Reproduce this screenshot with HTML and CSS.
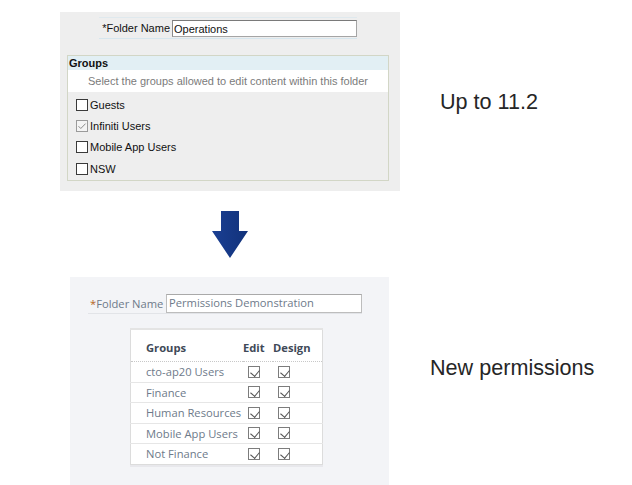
FILE: index.html
```html
<!DOCTYPE html>
<html>
<head>
<meta charset="utf-8">
<link rel="stylesheet" href="styles.css">
</head>
<body>
<main class="slide">
  <section class="row row-old">
    <div class="panel old">
      <div class="old-name">
        <span class="old-label">*Folder Name</span>
        <span class="old-input">Operations</span>
      </div>
      <div class="old-groups">
        <div class="old-head">Groups</div>
        <div class="old-desc">Select the groups allowed to edit content within this folder</div>
        <ul class="old-list">
          <li><span class="obox"></span>Guests</li>
          <li><span class="obox on"><svg viewBox="0 0 12 12" width="12" height="12"><path d="M2.5 6.2 L4.8 8.5 L9.6 3.6" fill="none" stroke="#8a8a8a" stroke-width="1"/></svg></span>Infiniti Users</li>
          <li><span class="obox"></span>Mobile App Users</li>
          <li><span class="obox"></span>NSW</li>
        </ul>
      </div>
    </div>
    <div class="caption cap-old">Up to 11.2</div>
  </section>

  <div class="arrow">
    <svg width="37" height="48" viewBox="0 0 37 48">
      <defs>
        <linearGradient id="ag" x1="0" y1="0" x2="1" y2="0">
          <stop offset="0" stop-color="#1a3f93"/>
          <stop offset="1" stop-color="#12327a"/>
        </linearGradient>
      </defs>
      <path d="M9 0 H27 V20 H36 L18 47 L0 20 H9 Z" fill="url(#ag)"/>
    </svg>
  </div>

  <section class="row row-new">
    <div class="panel new">
      <div class="new-name">
        <span class="new-label"><span class="req">*</span>Folder Name</span>
        <span class="new-input">Permissions Demonstration</span>
      </div>
      <table class="perm">
        <thead>
          <tr><th class="g">Groups</th><th>Edit</th><th>Design</th></tr>
        </thead>
        <tbody>
          <tr><td class="g">cto-ap20 Users</td><td><span class="nbox"></span></td><td><span class="nbox"></span></td></tr>
          <tr><td class="g">Finance</td><td><span class="nbox"></span></td><td><span class="nbox"></span></td></tr>
          <tr><td class="g">Human Resources</td><td><span class="nbox"></span></td><td><span class="nbox"></span></td></tr>
          <tr><td class="g">Mobile App Users</td><td><span class="nbox"></span></td><td><span class="nbox"></span></td></tr>
          <tr><td class="g">Not Finance</td><td><span class="nbox"></span></td><td><span class="nbox"></span></td></tr>
        </tbody>
      </table>
    </div>
    <div class="caption cap-new">New permissions</div>
  </section>
</main>
</body>
</html>
```

FILE: styles.css
```css
html, body {
  margin: 0;
  padding: 0;
  background: #ffffff;
}

.slide {
  width: 632px;
  height: 485px;
  overflow: hidden;
  display: flex;
  flex-direction: column;
}

.row {
  display: flex;
}

.row-old {
  padding: 12px 0 0 60px;
  align-items: center;
}

.caption {
  font-family: "Liberation Sans", Arial, sans-serif;
  font-size: 21.6px;
  color: #262626;
  line-height: 24px;
}

.cap-old {
  margin-left: 40px;
}

.cap-new {
  margin-left: 41px;
  margin-top: 79px;
}

/* ---------- old panel ---------- */
.panel.old {
  width: 340px;
  height: 179px;
  box-sizing: border-box;
  background: #eeeeee;
  padding: 5px 0 0 7px;
  font-family: "Liberation Sans", Arial, sans-serif;
  font-size: 11px;
  color: #111;
}

.old-name {
  margin-left: 32px;
  width: 258px;
  height: 20px;
  border-top: 1px solid #dfe9ee;
  border-bottom: 1px solid #d6e6ee;
  display: flex;
  align-items: center;
  gap: 2px;
}

.old-label {
  width: 71px;
  text-align: right;
}

.old-input {
  width: 185px;
  height: 17px;
  box-sizing: border-box;
  background: #fff;
  border: 1px solid #a5a5a5;
  border-top-color: #7a7a7a;
  border-left-color: #8a8a8a;
  padding: 1px 0 0 1px;
  line-height: 14px;
}

.old-groups {
  margin-top: 16px;
  width: 322px;
  height: 126px;
  box-sizing: border-box;
  border: 1px solid #d2d6c6;
}

.old-head {
  background: #e2eff4;
  font-weight: bold;
  height: 14px;
  line-height: 14px;
  padding-left: 1px;
}

.old-desc {
  background: #fff;
  color: #7b7b7b;
  height: 22px;
  line-height: 22px;
  text-align: center;
}

.old-list {
  list-style: none;
  margin: 0;
  padding: 2px 0 0 8px;
}

.old-list li {
  height: 21.3px;
  display: flex;
  align-items: center;
  gap: 2px;
}

.obox {
  width: 12px;
  height: 12px;
  box-sizing: border-box;
  border: 1px solid #3a3a3a;
  background: #fff;
  display: inline-flex;
  align-items: center;
  justify-content: center;
}

.obox.on {
  border-color: #9a9a9a;
  background: #f4f4f4;
}

.obox svg {
  display: block;
  margin: -1px;
}

/* ---------- arrow ---------- */
.arrow {
  margin: 20px 0 0 212px;
  height: 48px;
}

.arrow svg {
  display: block;
}

/* ---------- new panel ---------- */
.row-new {
  margin-top: 18px;
  padding-left: 70px;
}

.panel.new {
  width: 319px;
  height: 208px;
  box-sizing: border-box;
  background: #f3f4f7;
  padding: 16px 0 0 18px;
  font-family: "Open Sans", "Liberation Sans", sans-serif;
  font-size: 11.2px;
  color: #6e7a8a;
}

.new-name {
  width: 274px;
  height: 20px;
  border-bottom: 1px solid #e2e4e8;
  display: flex;
  align-items: center;
  gap: 1px;
}

.new-label {
  padding-left: 2px;
  width: 75px;
  color: #6e7a8a;
}

.req {
  color: #b5651d;
}

.new-input {
  width: 196px;
  height: 19px;
  box-sizing: border-box;
  background: #fff;
  border: 1px solid #bdbdbd;
  border-top-color: #a9a9a9;
  padding-left: 2px;
  line-height: 16px;
  color: #6e7a8a;
}

.perm {
  margin: 14px 0 0 42px;
  width: 193px;
  border-collapse: collapse;
  background: #fff;
  border: 1px solid #dcdcdc;
  border-top: 2px solid #e4e4e4;
  box-shadow: 0 2px 0 #e8e8ec;
}

.perm th {
  font-weight: bold;
  color: #3f4a58;
  height: 28px;
  padding: 3px 0 0;
  text-align: left;
  border-bottom: 1px dotted #c8c8c8;
}

.perm th.g {
  padding-left: 15px;
  width: 97px;
}

.perm td {
  height: 19.5px;
  padding: 0;
  border-bottom: 1px solid #e6e6e6;
  vertical-align: middle;
}

.perm tbody tr:last-child td {
  border-bottom: none;
}

.perm td.g {
  padding-left: 15px;
  white-space: nowrap;
}

.perm td:nth-child(2),
.perm th:nth-child(2) {
  width: 30px;
}

.nbox {
  display: block;
  width: 12px;
  height: 12px;
  margin-left: 5px;
  box-sizing: border-box;
  border: 1px solid #7c7c7c;
  background: #fff;
  position: relative;
}

.nbox::after {
  content: "";
  position: absolute;
  left: 3px;
  top: 1px;
  width: 5px;
  height: 7px;
  border-right: 1px solid #555;
  border-bottom: 1px solid #555;
  transform: rotate(40deg);
}
```
